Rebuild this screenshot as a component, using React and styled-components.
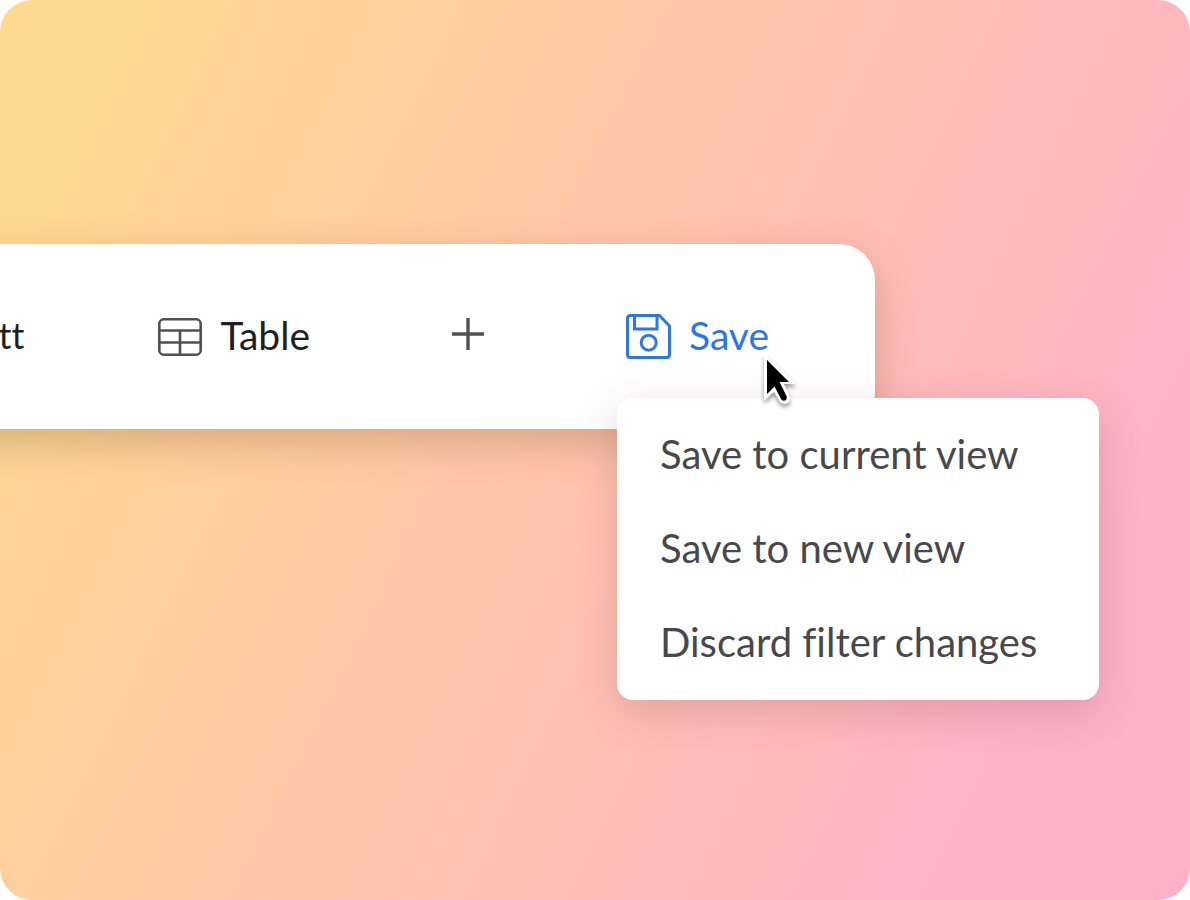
import React from "react";
import styled, { createGlobalStyle } from "styled-components";

const GlobalStyle = createGlobalStyle`
  * { box-sizing: border-box; }
  body { margin: 0; background: #fff; }
`;

const Canvas = styled.main`
  min-height: 100vh;
  padding: 244px 315px 0 0;
  overflow: hidden;
  border-radius: 32px;
  background: linear-gradient(116deg, #ffd891 9%, #ffb1c8 86%);
  font-family: Lato, "Open Sans", sans-serif;
  font-variant-ligatures: none;
`;

const Toolbar = styled.nav`
  display: flex;
  align-items: center;
  justify-content: flex-end;
  gap: 142px;
  height: 185px;
  margin-left: -60px;
  padding-right: 104px;
  border-radius: 0 36px 36px 0;
  background: #fff;
  box-shadow: 0 14px 40px rgba(130, 95, 60, 0.32);
`;

const ToolButton = styled.button`
  display: flex;
  flex: none;
  align-items: center;
  gap: 18px;
  padding: 0;
  border: 0;
  background: none;
  color: ${(p) => (p.$active ? "#2f76de" : "#1f1f21")};
  font: inherit;
  font-size: 39px;
  line-height: 44px;
  cursor: pointer;

  svg {
    display: block;
    flex: none;
  }
`;

const Label = styled.span`
  padding-bottom: 3px;
`;

const PartialTab = styled(ToolButton)`
  margin-right: -8px;
  font-size: 36px;
`;

const AddButton = styled(ToolButton)`
  padding-bottom: 6px;
`;

const SaveControl = styled.div`
  position: relative;
  flex: none;
  min-width: 145px;
`;

const Menu = styled.div`
  position: absolute;
  top: 85px;
  left: -9px;
  display: flex;
  flex-direction: column;
  gap: 50px;
  width: 482px;
  padding: 34px 43px 36px;
  border-radius: 16px;
  background: #fff;
  box-shadow: 0 12px 40px rgba(130, 80, 80, 0.24);
`;

const MenuItem = styled.button`
  padding: 0;
  border: 0;
  background: none;
  color: #48484a;
  font: inherit;
  font-size: 40px;
  line-height: 44px;
  text-align: left;
  white-space: nowrap;
  cursor: pointer;
`;

const Pointer = styled.svg`
  position: absolute;
  top: 41px;
  left: 134px;
  overflow: visible;
  filter: drop-shadow(0 3px 2px rgba(0, 0, 0, 0.4));
  pointer-events: none;
`;

const TableIcon = () => (
  <svg width="44" height="38" viewBox="0 0 44 38" fill="none" stroke="#505052" strokeWidth="2.6" aria-hidden="true">
    <rect x="1.3" y="1.3" width="41.4" height="35.4" rx="4.5" />
    <path d="M2 12.5H42M2 24.5H42M22 12.5V36" />
  </svg>
);

const PlusIcon = () => (
  <svg width="32" height="32" viewBox="0 0 32 32" fill="none" stroke="#505052" strokeWidth="3.4" aria-hidden="true">
    <path d="M0 16H32M16 0V32" />
  </svg>
);

const SaveIcon = () => (
  <svg width="45" height="45" viewBox="0 0 45 45" fill="none" stroke="currentColor" strokeWidth="3" aria-hidden="true">
    <path d="M4.5 1.5H33.5L43.5 12V40.5Q43.5 43.5 40.5 43.5H4.5Q1.5 43.5 1.5 40.5V4.5Q1.5 1.5 4.5 1.5Z" strokeLinejoin="round" />
    <path d="M8.5 2V15H31V2" />
    <circle cx="22.7" cy="28.7" r="7.5" />
  </svg>
);

const menuItems = ["Save to current view", "Save to new view", "Discard filter changes"];

export default function App() {
  return (
    <>
      <GlobalStyle />
      <Canvas>
        <Toolbar aria-label="Views">
          <PartialTab type="button">
            <Label>tt</Label>
          </PartialTab>
          <ToolButton type="button">
            <TableIcon />
            <Label>Table</Label>
          </ToolButton>
          <AddButton type="button" aria-label="Add view">
            <PlusIcon />
          </AddButton>
          <SaveControl>
            <ToolButton type="button" $active aria-haspopup="menu" aria-expanded="true">
              <SaveIcon />
              <Label>Save</Label>
            </ToolButton>
            <Menu role="menu">
              {menuItems.map((label) => (
                <MenuItem key={label} type="button" role="menuitem">
                  {label}
                </MenuItem>
              ))}
            </Menu>
            <Pointer width="36" height="52" viewBox="0 0 36 52" aria-hidden="true">
              <path
                d="M4 2Q4.500 0 7 2L36 30H24L30 43Q31 47.500 27 49.500Q22 51.500 19.500 47L14 38L4 47Z"
                fill="#fff"
              />
              <path d="M7 6V40L14.500 32.500L21 45Q22.500 47.500 25 46.500Q27.500 45 26.500 42L19.500 28H29Z" fill="#000" />
            </Pointer>
          </SaveControl>
        </Toolbar>
      </Canvas>
    </>
  );
}
